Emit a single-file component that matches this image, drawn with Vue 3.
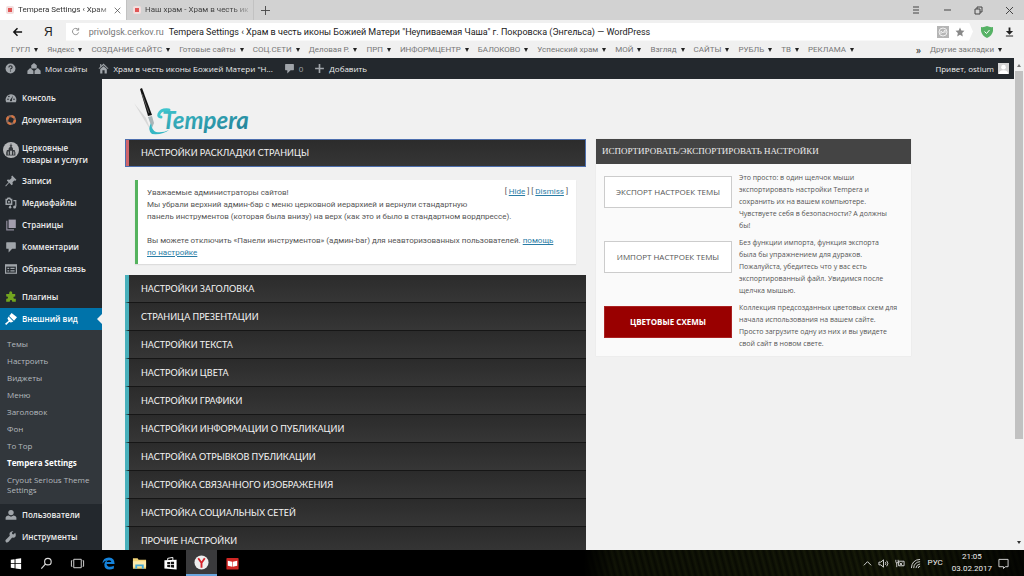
<script setup>
const bookmarks = [
  'ГУГЛ', 'Яндекс', 'СОЗДАНИЕ САЙТС', 'Готовые сайты', 'СОЦ.СЕТИ', 'Деловая Р.', 'ПРП', 'ИНФОРМЦЕНТР',
  'БАЛОКОВО', 'Успенский храм', 'МОЙ', 'Взгляд', 'САЙТЫ', 'РУБЛЬ', 'ТВ', 'РЕКЛАМА',
]
const menu = [
  { icon: 'gauge', label: 'Консоль' },
  { icon: 'ring', label: 'Документация', gap: true },
  { icon: 'church', label: 'Церковные товары и услуги', tall: true },
  { icon: 'pin', label: 'Записи' },
  { icon: 'media', label: 'Медиафайлы' },
  { icon: 'pages', label: 'Страницы' },
  { icon: 'comment', label: 'Комментарии' },
  { icon: 'form', label: 'Обратная связь', gap: true },
  { icon: 'plugin', label: 'Плагины' },
  { icon: 'brush', label: 'Внешний вид', active: true },
]
const submenu = ['Темы', 'Настроить', 'Виджеты', 'Меню', 'Заголовок', 'Фон', 'To Top', 'Tempera Settings', 'Cryout Serious Theme Settings']
const menuEnd = [
  { icon: 'user', label: 'Пользователи' },
  { icon: 'wrench', label: 'Инструменты' },
]
const sections = [
  'Настройки заголовка', 'Страница презентации', 'Настройки текста', 'Настройки цвета', 'Настройки графики',
  'Настройки информации о публикации', 'Настройка отрывков публикации', 'Настройка связанного изображения',
  'Настройка социальных сетей', 'Прочие настройки',
]
const actions = [
  { label: 'Экспорт настроек темы', text: 'Это просто: в один щелчок мыши\nэкспортировать настройки Tempera и\nсохранить их на вашем компьютере.\nЧувствуете себя в безопасности? А должны\nбы!' },
  { label: 'Импорт настроек темы', text: 'Без функции импорта, функция экспорта\nбыла бы упражнением для дураков.\nПожалуйста, убедитесь что у вас есть\nэкспортированный файл. Увидимся после\nщелчка мышью.' },
  { label: 'Цветовые схемы', text: 'Коллекция предсозданных цветовых схем для\nначала использования на вашем сайте.\nПросто загрузите одну из них и вы увидете\nсвой сайт в новом свете.', red: true },
]
const icons = {
  gauge: '<path fill="#a0a5aa" d="M2 17a9 9 0 1 1 16 0z"/><g fill="#23282d"><circle cx="5" cy="12" r="1.3"/><circle cx="6.500" cy="7.500" r="1.300"/><circle cx="15" cy="12" r="1.300"/><path d="M13.500 6 11.500 13a1.700 1.700 0 1 1-2-.800z"/></g>',
  ring: '<circle cx="10" cy="10" r="6.500" fill="none" stroke="#8e6a5c" stroke-width="4"/><circle cx="10" cy="10" r="6.500" fill="none" stroke="#d87540" stroke-width="4" stroke-dasharray="5.100 5.100"/>',
  church: '<circle cx="10" cy="10" r="10" fill="#b4b6b8"/><path fill="#34383c" d="M9.500 2h1v2h1v1h-1l2 3v2h2l1 3v4H4v-4l1-3h2V8l2.500-3h-1V4h1z"/><path fill="#c5c7c9" d="M6 12h1v4H6zm3-1h2v5H9zm4 1h1v4h-1z"/>',
  pin: '<path fill="#a0a5aa" d="m12 1 7 7-1.500 1.500-2-.500-3 3 .500 3.500L11 17l-4-4-5.500 6-1-1L6 12 3 9l1.500-1.500L8 8l3-3-.500-2.500z"/>',
  media: '<path fill="none" stroke="#a0a5aa" stroke-width="2.500" d="M2 4h2l1-2h3l1 2h2v8H2z"/><circle cx="6.500" cy="8" r="1.700" fill="#a0a5aa"/><path fill="none" stroke="#a0a5aa" stroke-width="2" d="M14 6h4v10M9 14v3"/><circle cx="16" cy="16.500" r="2.500" fill="#a0a5aa"/><circle cx="8.500" cy="17" r="2" fill="#a0a5aa"/>',
  pages: '<path fill="#a39eae" d="M6 1h12v14H6z"/><path fill="none" stroke="#8e8a9b" stroke-width="2" d="M4 4H3v14h11v-1"/>',
  comment: '<path fill="#a0a5aa" d="M3 2h14q1 0 1 1v9q0 1-1 1h-5l-6 6v-6H3q-1 0-1-1V3q0-1 1-1z"/>',
  form: '<path fill="#a0a5aa" d="M0 2h20v16H0z"/><path fill="#23282d" d="M2 6h16v10H2z"/><path fill="#a0a5aa" d="M4 8h3v2H4zm5 0h7v2H9zm-5 4h3v2H4zm5 0h7v2H9z"/>',
  plugin: '<path fill="#73a51f" d="M2 5h5V3a2.500 2.500 0 0 1 5 0v2h5v4h-1a2 2 0 0 0 0 4h2v5h-6v-1a2 2 0 0 0-4 0v1H2v-5h1a2 2 0 0 0 0-4H2z"/>',
  brush: '<path fill="#fff" d="m11 0 9 7-5 6-8-8zM6 6l8 8-4 2-3-1-5 5-2-2 6-5-2-4z"/>',
  user: '<circle cx="10" cy="6" r="4.500" fill="#a0a5aa"/><path fill="#a0a5aa" d="M1 18v-4q1-3 5-3l4 2 4-2q4 0 5 3v4z"/>',
  wrench: '<path fill="#a0a5aa" d="m17 3-3 3-2-1-.500-2L14 .500Q10-.500 8 3q-1 2 0 5l-7 7q-1 2 1 4 2 1 4-1l6-7q3 1 5-1 2-3 0-7z"/>',
}
</script>

<template>
  <div class="screen">
    <nav class="tabs" aria-label="Вкладки">
      <button class="tab on"><i class="fav"></i><span>Tempera Settings ‹ Храм</span><svg class="x" viewBox="0 0 10 10"><path d="m1 1 8 8M9 1 1 9" /></svg></button>
      <button class="tab"><i class="fav"></i><span>Наш храм - Храм в честь ик</span></button>
      <button class="plus" aria-label="Новая вкладка"><svg viewBox="0 0 10 10"><path d="M5 0v10M0 5h10" /></svg></button>
      <div class="wins">
        <button aria-label="Меню"><svg viewBox="0 0 10 10"><path d="M2 2h6M2 5h6M2 8h6" /></svg></button>
        <button aria-label="Свернуть"><svg viewBox="0 0 10 10"><path d="M2 5h7" /></svg></button>
        <button aria-label="Развернуть"><svg viewBox="0 0 10 10"><path d="M2 4h5v5H2zM4 4V2h5v5H7" /></svg></button>
        <button aria-label="Закрыть"><svg viewBox="0 0 10 10"><path d="m2 2 7 7M9 2 2 9" /></svg></button>
      </div>
    </nav>
    <div class="toolbar">
      <button class="back" aria-label="Назад"><svg viewBox="0 0 12 10"><path d="M11 5H2m4-4L2 5l4 4" /></svg></button>
      <a class="ya" href="#">Я</a>
      <div class="address">
        <svg class="reload" viewBox="0 0 10 10"><path d="M8 3a3.500 3.500 0 1 0 .500 3M8.500 1v2.500H6" /></svg>
        <span class="host">privolgsk.cerkov.ru</span>
        <span class="title">Tempera Settings ‹ Храм в честь иконы Божией Матери "Неупиваемая Чаша" г. Покровска (Энгельса) — WordPress</span>
        <svg class="badge" viewBox="0 0 12 12"><path fill="#b5b5b5" d="M0 0h12v12H0z" /><circle cx="6" cy="6" r="4" fill="none" stroke="#eee" /><path fill="none" stroke="#eee" d="M4 8V5l2 2 2-3v3" /></svg>
        <svg class="star" viewBox="0 0 20 20"><path fill="#888" d="m10 1 2.700 6 6.300.700-4.700 4.400L15.600 19 10 15.500 4.400 19l1.300-6.900L1 7.700 7.300 7z" /></svg>
      </div>
      <svg class="shield" viewBox="0 0 12 12"><path fill="#56b265" d="M6 0q3 1.500 6 1v4q-1 5-6 7Q1 10 0 5V1q3 .500 6-1z" /><path fill="none" stroke="#fff" d="m3.500 5.500 2 2 3-3.500" /></svg>
      <svg class="down" viewBox="0 0 10 10"><path fill="#222" d="M4 0h2v4h3L5 8 1 4h3zM1 9h8v1H1z" /></svg>
    </div>
    <nav class="bookmarks" aria-label="Закладки">
      <button v-for="b in bookmarks" :key="b">{{ b }}<i></i></button>
      <button class="rest">»</button>
      <button>Другие закладки<i></i></button>
    </nav>
    <div class="view">
      <div class="site">
        <header class="adminbar">
          <a href="#" aria-label="Справка"><svg class="ic" viewBox="0 0 20 20"><circle cx="10" cy="10" r="9" fill="#a0a5aa" /><path d="M7 8q0-3 3-3t3 2.500q0 2-3 3.500v1m0 1.500v2" fill="none" stroke="#23282d" stroke-width="2" /></svg></a>
          <a href="#"><svg class="ic wide" viewBox="0 0 24 20"><path fill="#a0a5aa" d="m12 0 5 4v6H7V4zM5 9l6 5v6H0v-6zm14 0 5 5v6H13v-6z" /></svg>Мои сайты</a>
          <a href="#"><svg class="ic" viewBox="0 0 20 20"><path fill="#a0a5aa" d="m10 1 9 9-1 1-8-7-8 7-1-1 3-3V2h2v3zM4 11l6-5 6 5v8h-4v-6H8v6H4z" /></svg>Храм в честь иконы Божией Матери "Н...</a>
          <a href="#" class="count"><svg class="ic" viewBox="0 0 20 20" v-html="icons.comment"></svg>0</a>
          <a href="#"><svg class="ic" viewBox="0 0 20 20"><path stroke="#a0a5aa" stroke-width="3" d="M10 2v16M2 10h16" /></svg>Добавить</a>
          <a href="#" class="hello">Привет, ostium<svg class="avatar" viewBox="0 0 12 12"><path fill="#d5d5d5" d="M0 0h12v12H0z" /><circle cx="6" cy="4.500" r="2.500" fill="#fff" /><path fill="#fff" d="M1 12q0-4 5-4t5 4z" /></svg></a>
        </header>
        <div class="body">
          <nav class="side" aria-label="Консоль">
            <a v-for="m in menu" :key="m.label" href="#" class="item" :class="{ active: m.active, tall: m.tall, gap: m.gap }">
              <svg viewBox="0 0 20 20" v-html="icons[m.icon]"></svg><span>{{ m.label }}</span>
            </a>
            <div class="sub">
              <a v-for="s in submenu" :key="s" href="#" :class="{ current: s === 'Tempera Settings' }">{{ s }}</a>
            </div>
            <a v-for="m in menuEnd" :key="m.label" href="#" class="item">
              <svg viewBox="0 0 20 20" v-html="icons[m.icon]"></svg><span>{{ m.label }}</span>
            </a>
          </nav>
          <main>
            <section class="left">
              <svg class="logo" viewBox="0 0 120 54" role="img" aria-label="Tempera">
                <defs>
                  <linearGradient id="teal" x1="0" y1="0" x2="1" y2="1"><stop offset="0" stop-color="#40c8d0" /><stop offset="1" stop-color="#217a92" /></linearGradient>
                </defs>
                <path d="M3 18 20 46l-5-13z" fill="#d8d8d8" />
                <path d="m9 4 2-1 10 27-4 1z" fill="#111" />
                <path d="m11 9 7 19" stroke="#777" stroke-width=".7" />
                <path d="m17 32 4-1 2 7-2 5z" fill="#a9b5b8" />
                <path d="M20 38q1 8 5 9 7 1 13-2-6 5-17 4-5-4-1-11z" fill="#35b7c4" />
                <path d="M30 32q-3 0-2-3 2-5 10-4" fill="none" stroke="#3fc4cd" stroke-width="3" stroke-linecap="round" />
                <text x="31" y="44" class="word">Tempera</text>
              </svg>
              <button class="bar open">Настройки раскладки страницы</button>
              <div class="notice">
                <div class="links">[ <a href="#">Hide</a> ] [ <a href="#">Dismiss</a> ]</div>
                <p>Уважаемые администраторы сайтов!<br>Мы убрали верхний админ-бар с меню церковной иерархией и вернули стандартную<br>панель инструментов (которая была внизу) на верх (как это и было в стандартном вордпрессе).</p>
                <p>Вы можете отключить «Панели инструментов» (админ-bar) для неавторизованных пользователей. <a href="#">помощь<br>по настройке</a></p>
              </div>
              <button v-for="s in sections" :key="s" class="bar">{{ s }}</button>
            </section>
            <aside class="panel">
              <h2>Испортировать/экспортировать настройки</h2>
              <div v-for="a in actions" :key="a.label" class="action">
                <button :class="{ red: a.red }">{{ a.label }}</button>
                <p>{{ a.text }}</p>
              </div>
            </aside>
          </main>
        </div>
      </div>
      <div class="scroll"><i class="up"></i><div class="thumb"></div><i class="dn"></i></div>
    </div>
    <footer class="taskbar">
      <button aria-label="Пуск"><svg viewBox="0 0 16 16"><path fill="#fff" d="m3 4 4-.600v4.300H3zM8 3.200l6-.900v5.400H8zM3 8.500h4V13l-4-.600zM8 8.500h6V14l-6-.800z" /></svg></button>
      <button aria-label="Поиск"><svg viewBox="0 0 16 16"><g fill="none" stroke="#ddd" stroke-width="1.200"><circle cx="9.500" cy="6" r="3.500" /><path d="m7 8.500-4.500 5" /></g></svg></button>
      <button aria-label="Задачи"><svg viewBox="0 0 16 16"><path fill="none" stroke="#ddd" d="M4 3.500h8v9H4zM2.500 5h-1v6h1m11-6h1v6h-1" /></svg></button>
      <button aria-label="Edge"><svg viewBox="0 0 16 16"><path fill="#1583dc" d="M1.500 8Q2 1.500 8.500 1.500q6 0 6 7H6q.300 3 3.700 3 2 0 4-1.200v3Q11.500 14.500 9 14.500 3.500 14 3.500 9q0-3 3-4.500Q3.500 5 1.500 8zM6 6.500h5Q11 4.500 8.500 4.500T6 6.500z" /></svg></button>
      <button aria-label="Проводник"><svg viewBox="0 0 16 16"><path fill="#f3d57a" d="M1 2.500h5l1 1.500h8v9.500H1z" /><path fill="#fbe9a9" d="M1 5.500h14v6H1z" /><path fill="#43a8d8" d="M3.500 13.500V9h9v4.500h-2V11h-5v2.500z" /></svg></button>
      <button aria-label="Магазин"><svg viewBox="0 0 16 16"><path fill="#fff" d="M1.500 4.500 14.500 4v10.500l-13-1.300z" /><path fill="none" stroke="#fff" d="M5 5V2.500L10.500 1.500V5" /><path fill="#111" d="m4.500 6.500 3-.200v2.500h-3zM8.300 6.200l3.500-.200v2.800H8.300zM4.500 9.500h3V12l-3-.300zM8.300 9.500h3.500v3l-3.500-.400z" /></svg></button>
      <button class="cur" aria-label="Браузер"><svg viewBox="0 0 16 16"><circle cx="8" cy="8" r="7.500" fill="#eee" /><path fill="none" stroke="#d6242c" stroke-width="2" d="m4.500 3.500 3.500 5 3.500-5M8 8v5.500" /></svg></button>
      <button aria-label="Книги"><svg viewBox="0 0 16 16"><rect x="1.500" y="2" width="13" height="12.500" rx="1" fill="#d02725" /><path fill="#fff" d="m3 5 4.700 1v5.500L3 10.500zM13 5 8.300 6v5.500l4.700-1z" /></svg></button>
      <div class="tray">
        <svg viewBox="0 0 12 12"><path d="m2 8 4-4 4 4" /></svg>
        <svg viewBox="0 0 12 12"><path d="M1 4.500h2l3-2.500v8L3 7.500H1zM8 4.500q1 1.500 0 3M9.500 3q2.500 3 0 6" /></svg>
        <svg viewBox="0 0 12 12"><path d="M2 2v2q0 1.500 1 1.500T4.500 4V2M3 5v5M5 3.500h6v5H5zM6 5l3 3M9 5 6 8" /></svg>
        <svg viewBox="0 0 12 12"><path d="M1.500 11Q2 2 11 1.500M4 11q.500-6.500 7-7M6.500 11Q7 7 11 6.500M9 11q0-2 2-2" /></svg>
        <span class="lang">РУС</span>
        <time>21:05<br>03.02.2017</time>
        <svg class="note" viewBox="0 0 12 12"><path d="M1 1.500h10v8H8l-2 2v-2H1z" /></svg>
      </div>
    </footer>
  </div>
</template>

<style>
body { margin: 0; }
</style>

<style scoped>
* { box-sizing: border-box; }
.screen { height: 100vh; display: flex; flex-direction: column; overflow: hidden; font: 8px/12px "Open Sans", "Noto Sans", sans-serif; color: #444; background: #f1f1f1; }
button { font: inherit; color: inherit; border: 0; padding: 0; margin: 0; background: none; text-align: left; }
a { color: inherit; text-decoration: none; }
p { margin: 0; }
svg { flex: none; }

.tabs, .toolbar, .bookmarks, .taskbar { font-family: Roboto, "Open Sans", sans-serif; }
.tabs { flex: none; height: 20px; display: flex; align-items: center; background: #d2d2d2; }
.tab { width: 127px; height: 20px; display: flex; align-items: center; gap: 4px; padding: 0 5px 0 6px; border-right: 1px solid #c2c2c2; white-space: nowrap; }
.tab span { flex: 1; min-width: 0; mask-image: linear-gradient(90deg, #000 85%, #0004); }
.tab.on { background: #fff; color: #333; }
.fav { flex: none; width: 8px; height: 8px; border: 2px solid #f3dede; border-radius: 2px; background: #e05656; }
.x { width: 7px; height: 7px; }
.x path, .plus path, .wins path { fill: none; stroke: #444; stroke-width: 1; }
.plus { padding: 0 7px; display: flex; }
.plus svg { width: 9px; height: 9px; }
.wins { margin-left: auto; display: flex; gap: 21px; padding-right: 10px; }
.wins button { display: flex; }
.wins svg { width: 10px; height: 10px; }

.toolbar { flex: none; height: 21px; display: flex; align-items: center; padding: 2px 10px 0 12px; background: #f0f0f0; }
.back { display: flex; }
.back svg { width: 11px; height: 10px; }
.back path { fill: none; stroke: #111; stroke-width: 1.6; }
.ya { margin: 0 13px 0 21px; font: 12px/16px "Liberation Sans", sans-serif; color: #222; }
.address { flex: 1; height: 18px; display: flex; align-items: center; padding: 0 8px 0 5px; background: #fff; font-size: 9px; white-space: nowrap; clip-path: polygon(0 0, calc(100% - 4px) 0, 100% 50%, calc(100% - 4px) 100%, 0 100%); }
.reload { width: 9px; height: 9px; margin-right: 9px; }
.reload path { fill: none; stroke: #888; }
.host { color: #777; margin-right: 5px; }
.title { flex: 1; color: #222; }
.badge { width: 12px; height: 12px; margin-right: 6px; }
.star { width: 10px; height: 10px; }
.shield { width: 12px; height: 12px; margin: 0 12px 0 8px; }
.down { width: 9px; height: 10px; }

.bookmarks { flex: none; height: 17px; display: flex; align-items: center; gap: 9px; padding: 0 22px 0 11px; background: #f0f0f0; color: #777; white-space: nowrap; }
.bookmarks button { display: flex; align-items: center; gap: 4px; }
.bookmarks i { border: 2px solid transparent; border-top: 4px solid #222; border-bottom: 0; }
.bookmarks .rest { margin-left: auto; color: #222; font-family: "Open Sans", sans-serif; font-size: 10px; }

.view { flex: 1; min-height: 0; display: flex; }
.site { flex: 1; min-width: 0; display: flex; flex-direction: column; overflow: hidden; }
.adminbar { flex: none; height: 21px; display: flex; align-items: center; padding: 0 5px; background: #23282d; color: #eee; }
.adminbar a { display: flex; align-items: center; gap: 4px; margin-right: 11px; white-space: nowrap; }
.adminbar .ic { width: 11px; height: 11px; }
.adminbar .wide { width: 14px; }
.adminbar .count { color: #a0a5aa; }
.adminbar a.hello { margin: 0 0 0 auto; }
.avatar { width: 11px; height: 11px; }
.body { flex: 1; min-height: 0; display: flex; overflow: hidden; }

.side { flex: none; width: 102px; padding-top: 8px; background: #23282d; color: #eee; font-size: 8px; }
.item { position: relative; display: flex; align-items: center; gap: 5px; height: 22px; padding: 0 4px 0 5px; font-weight: 600; }
.item svg { width: 12px; height: 12px; }
.item.tall { height: 33px; padding-left: 3px; gap: 3px; }
.item.tall svg { width: 16px; height: 16px; align-self: flex-start; margin-top: 5px; }
.item.gap { margin-bottom: 6px; }
.item.active { background: #0073aa; color: #fff; }
.item.active::after { content: ""; position: absolute; right: 0; top: 6px; border: 5px solid transparent; border-right-color: #f1f1f1; border-left: 0; }
.sub { padding: 5px 7px 6px; background: #32373c; color: #b4b9be; }
.sub a { display: block; padding: 4px 0 3px; line-height: 10px; }
.sub .current { color: #fff; font-weight: 700; }

main { flex: 1; min-width: 0; display: grid; grid-template-columns: minmax(0, 461fr) minmax(0, 315fr); gap: 10px; align-items: start; padding: 6px 103px 0 23px; background: #f1f1f1; }
.left { display: flex; flex-direction: column; }
.logo { width: 120px; height: 54px; margin-left: 6px; }
.word { font: italic 700 24px Lato, sans-serif; fill: url(#teal); }
.bar { height: 28px; padding-left: 12px; border-left: 4px solid #48b0bb; border-bottom: 1px solid #161616; background: linear-gradient(#2b2b2b, #363636); color: #f4f4f4; font: 9px/14px Lato, "Open Sans", sans-serif; text-transform: uppercase; }
.bar.open { border-left-color: #d0646a; border-bottom: 0; outline: 1px solid #4d6fae; outline-offset: -1px; }
.notice { margin: 13px 10px 11px; padding: 7px 8px 5px 9px; border-left: 3px solid #55b35e; background: #fff; box-shadow: 0 1px 1px #ddd; color: #555; font-family: Roboto, "Open Sans", sans-serif; white-space: nowrap; }
.notice p + p { margin-top: 12px; }
.notice a { color: #2a7ca5; text-decoration: underline; }
.links { float: right; line-height: 10px; }

.panel { margin-top: 54px; padding-bottom: 6px; background: #fafafa; box-shadow: 0 0 1px #ddd; }
.panel h2 { margin: 0 0 8px; padding: 0 6px; background: #444; color: #eee; font: 9px/25px "Liberation Serif", serif; text-transform: uppercase; white-space: nowrap; }
.action { display: grid; grid-template-columns: 128px 1fr; gap: 7px; align-items: start; padding: 0 0 0 8px; }
.action + .action { margin-top: 5px; }
.action button { height: 32px; margin-top: 4px; border: 1px solid #ccc; background: #fff; color: #555; text-align: center; text-transform: uppercase; }
.action button.red { border-color: #a22; background: #900; color: #fff; font-weight: 700; }
.action p { font-size: 7px; line-height: 12px; color: #555; white-space: pre; }

.scroll { flex: none; width: 10px; display: flex; flex-direction: column; align-items: center; padding: 4px 0; background: #f1f1f1; }
.scroll i { border: 2px solid transparent; }
.up { border-top: 0; border-bottom: 3px solid #777 !important; }
.dn { border-bottom: 0; border-top: 3px solid #333 !important; margin-top: auto; }
.thumb { width: 8px; height: 76%; margin-top: 4px; background: #c1c1c1; }

.taskbar { flex: none; height: 26px; display: flex; background: linear-gradient(90deg, #000 57%, #0006 60%, #0003 88%, #000c), repeating-linear-gradient(75deg, #0c0f04 0, #1c210a 3px, #0c0f04 6px); color: #eee; }
.taskbar button { width: 31px; display: flex; align-items: center; justify-content: center; }
.taskbar button svg { width: 15px; height: 15px; }
.taskbar .cur { background: #3a3a3c; border-bottom: 2px solid #69a5de; }
.tray { margin-left: auto; display: flex; align-items: center; gap: 5px; padding-right: 15px; text-align: center; }
.tray svg { width: 11px; height: 11px; fill: none; stroke: #ddd; }
.tray time { margin: 0 1px 0 4px; line-height: 12px; }
.lang { margin-left: 2px; }
</style>
